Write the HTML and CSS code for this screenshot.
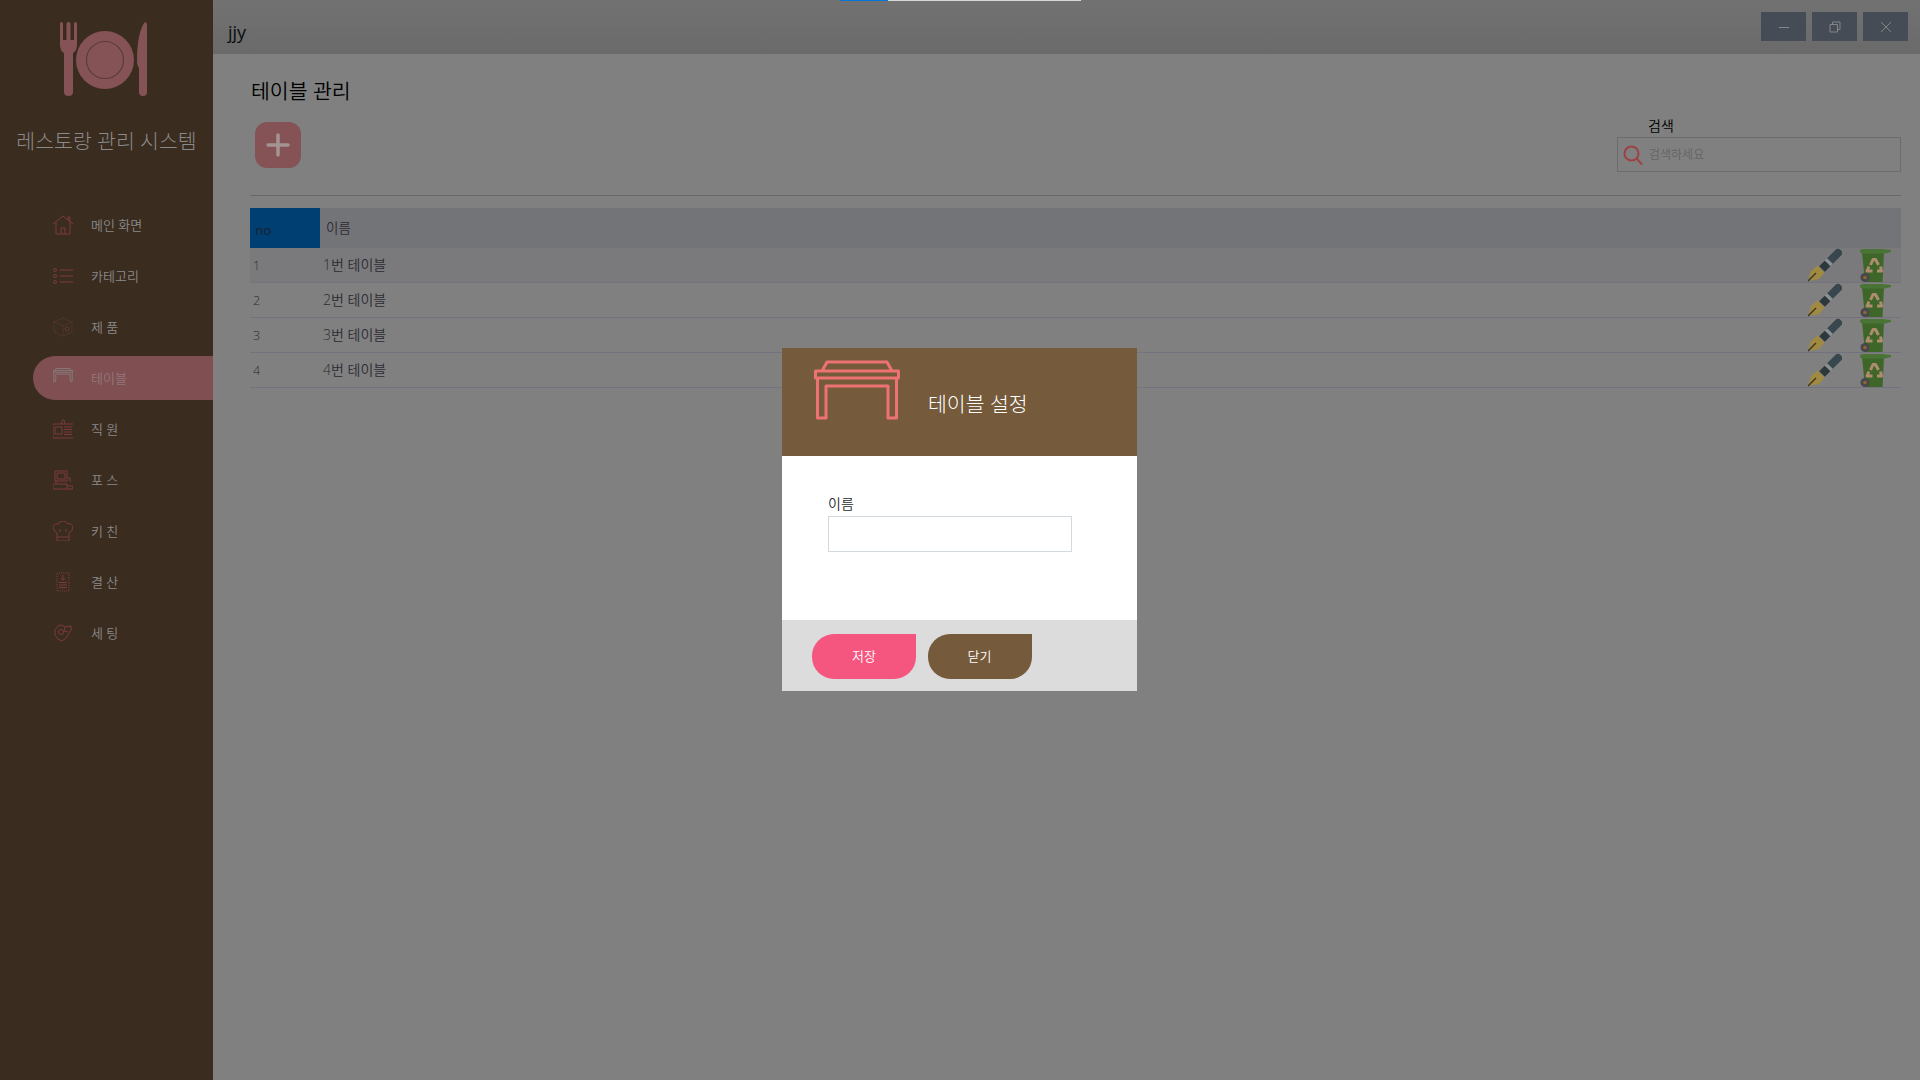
FILE: index.html
```html
<!DOCTYPE html>
<html lang="ko">
<head>
    <meta charset="UTF-8">
    <title>테이블 관리</title>
    <link rel="stylesheet" href="styles.css">
</head>
<body>
    <!-- shared icons -->
    <svg class="defs" width="0" height="0">
        <symbol id="ic-table" viewBox="0 0 86 60">
            <path d="M8 11 L13 2 H73 L78 11 M1.500 11 H84.500 V18 H1.500 Z M3.500 18 V58 H12 V26 H74 V58 H82.500 V18" fill="none" stroke="currentColor" stroke-width="3" stroke-linejoin="round"/>
        </symbol>
        <symbol id="ic-pen" viewBox="0 0 34 34">
            <path d="M22 13 L30 5" stroke="#37474d" stroke-width="8" stroke-linecap="round"/>
            <path d="M19.500 15.500 L22 13" stroke="#8c9092" stroke-width="8"/>
            <path d="M14 21 L19.500 15.500" stroke="#2c383c" stroke-width="8"/>
            <path d="M0 33 L3 23 L9.500 17.500 L16.500 24.500 L11 31 Z" fill="#a08a42"/>
            <path d="M0 33 L8 25" stroke="#3a3524" stroke-width="1.500"/>
        </symbol>
        <symbol id="ic-bin" viewBox="0 0 31 34">
            <path d="M2 4 H24 L22.500 34 H5 Z" fill="#3e6628"/>
            <path d="M0 3 Q0 1 3 1 H22 L31 2 V4 L25 5.500 H3 Q0 5.500 0 3 Z" fill="#4a7436"/>
            <path d="M10.500 17 L13 11.500 L15.500 11.500 L18.500 17 M20.500 18.500 L21.500 23 H17 M12.500 23 H7 L9 18.500" fill="none" stroke="#ae8c6e" stroke-width="3" stroke-linejoin="round"/>
            <circle cx="5" cy="29.500" r="4.500" fill="#4a4650"/>
            <circle cx="5" cy="29.500" r="1.800" fill="#8a6a2c"/>
        </symbol>
    </svg>

    <div class="strip"><span class="strip-on"></span><span class="strip-off"></span></div>

    <aside class="sidebar">
        <svg class="logo" viewBox="0 0 87 76" width="87" height="76">
            <path d="M0 4 Q0 2 1.500 2 Q3 2 3 4 V20 H6.500 V4 Q6.500 2 8.500 2 Q10.500 2 10.500 4 V20 H14 V4 Q14 2 15.500 2 Q17 2 17 4 V24 Q17 31 13 33 V72 Q13 76 8.500 76 Q4 76 4 72 V33 Q0 31 0 24 Z" fill="#855356"/>
            <circle cx="45" cy="40" r="29" fill="#855356"/>
            <circle cx="45" cy="40" r="18.500" fill="none" stroke="#5a3c38" stroke-width="1.200"/>
            <path d="M87 5 V72 Q87 76 83 76 Q79 76 79 72 V48 Q77 46 77 40 Q77 15 84 3 Q87 1 87 5 Z" fill="#855356"/>
        </svg>
        <h1 class="brand">레스토랑 관리 시스템</h1>
        <ul class="menu">
            <li class="menu-item">
                <svg class="menu-icon" viewBox="0 0 20 20"><path d="M0 9 L10 1 L20 9 M3 7 V19 H17 V7 M8 19 V13 H12 V19 M15 5 V2 H17 V7" /></svg>
                메인 화면
            </li>
            <li class="menu-item">
                <svg class="menu-icon" viewBox="0 0 20 20"><path d="M7 4 H20 M7 10 H20 M7 16 H20"/><circle cx="2" cy="4" r="1.500"/><circle cx="2" cy="10" r="1.500"/><circle cx="2" cy="16" r="1.500"/></svg>
                카테고리
            </li>
            <li class="menu-item">
                <svg class="menu-icon dim" viewBox="0 0 20 20"><path d="M10 1 L19 5 V15 L10 19 L1 15 V5 Z M1 5 L10 9 L19 5 M10 9 V19" stroke-dasharray="1.500 1"/><circle cx="14" cy="12" r="2"/></svg>
                제 품
            </li>
            <li class="menu-item is-active">
                <svg class="menu-icon table-icon" width="20" height="14"><use href="#ic-table"/></svg>
                테이블
            </li>
            <li class="menu-item">
                <svg class="menu-icon" viewBox="0 0 20 20"><path d="M0 5 H20 M0 5 V19 H20 M11 8 H19 M11 10.500 H19 M11 13 H19 M11 15.500 H19 M2 8 H9 V15 H2 Z M8 5 L9.500 1 H11 L12 5"/></svg>
                직 원
            </li>
            <li class="menu-item">
                <svg class="menu-icon" viewBox="0 0 20 20"><path d="M2 1 H14 V11 H2 Z M4 3 H12 V9 H4 Z M0 14 H14 V19 H0 Z M3 11 V14 M15 8 L17 8 V12 M14 16 H20 V19 H14"/></svg>
                포 스
            </li>
            <li class="menu-item">
                <svg class="menu-icon" viewBox="0 0 20 20"><path d="M4 12 Q0 10 0 6 Q1 2 5 3 Q7 0 10 0 Q13 0 15 3 Q19 2 20 6 Q20 10 16 12 V20 H4 Z M4 16 H16 M7 8 V11 M13 8 V11"/></svg>
                키 친
            </li>
            <li class="menu-item">
                <svg class="menu-icon" viewBox="0 0 20 20"><path d="M4 1 H16 V19 H4 Z" stroke-dasharray="1 1"/><path d="M10 3 V8 M8 6.500 L10 8 L12 6.500 M6 10.500 H14 M6 13 H14 M6 15.500 H14"/></svg>
                결 산
            </li>
            <li class="menu-item">
                <svg class="menu-icon" viewBox="0 0 20 20"><path d="M2 7 L5 3 L9 2 L12 4 L18 3 L18 7 L13 15 L9 18 L5 16 L2 12 Z M12 4 L11 8 L15 9"/><circle cx="8" cy="9" r="2.500"/></svg>
                세 팅
            </li>
        </ul>
    </aside>

    <div class="main">
        <header class="topbar">
            <span class="topbar-name">jjy</span>
            <div class="win-buttons">
                <button class="win-btn"><svg viewBox="0 0 12 12" width="12" height="12"><path d="M1 6.500 H11"/></svg></button>
                <button class="win-btn"><svg viewBox="0 0 12 12" width="12" height="12"><path d="M1 3.500 H8.500 V11 H1 Z M3.500 3.500 V1 H11 V8.500 H8.500"/></svg></button>
                <button class="win-btn"><svg viewBox="0 0 12 12" width="12" height="12"><path d="M1 1 L11 11 M11 1 L1 11"/></svg></button>
            </div>
        </header>

        <section class="content">
            <h2 class="page-title">테이블 관리</h2>
            <div class="toolbar">
                <button class="add-button"><svg viewBox="0 0 24 24" width="24" height="24"><path d="M12 2 V22 M2 12 H22"/></svg></button>
                <div class="search">
                    <label class="search-label">검색</label>
                    <div class="search-box">
                        <svg class="search-icon" viewBox="0 0 20 20" width="20" height="20"><circle cx="8.500" cy="8.500" r="7"/><path d="M13.500 13.500 L19 19.500"/></svg>
                        <span class="search-hint">검색하세요</span>
                    </div>
                </div>
            </div>
            <hr class="divider">
            <table class="list">
                <thead>
                    <tr><th class="col-no">no</th><th>이름</th><th></th></tr>
                </thead>
                <tbody>
                    <tr class="is-hover">
                        <td class="cell-no">1</td><td>1번 테이블</td>
                        <td class="actions"><svg class="pen"><use href="#ic-pen"/></svg><svg class="bin"><use href="#ic-bin"/></svg></td>
                    </tr>
                    <tr>
                        <td class="cell-no">2</td><td>2번 테이블</td>
                        <td class="actions"><svg class="pen"><use href="#ic-pen"/></svg><svg class="bin"><use href="#ic-bin"/></svg></td>
                    </tr>
                    <tr>
                        <td class="cell-no">3</td><td>3번 테이블</td>
                        <td class="actions"><svg class="pen"><use href="#ic-pen"/></svg><svg class="bin"><use href="#ic-bin"/></svg></td>
                    </tr>
                    <tr>
                        <td class="cell-no">4</td><td>4번 테이블</td>
                        <td class="actions"><svg class="pen"><use href="#ic-pen"/></svg><svg class="bin"><use href="#ic-bin"/></svg></td>
                    </tr>
                </tbody>
            </table>
        </section>
    </div>

    <div class="modal">
        <div class="modal-head">
            <svg class="modal-icon" width="86" height="60"><use href="#ic-table"/></svg>
            <h3 class="modal-title">테이블 설정</h3>
        </div>
        <div class="modal-body">
            <label class="field-label">이름</label>
            <input class="field-input" type="text">
        </div>
        <div class="modal-foot">
            <button class="btn btn-save">저장</button>
            <button class="btn btn-close">닫기</button>
        </div>
    </div>
</body>
</html>
```

FILE: styles.css
```css
* {
    box-sizing: border-box;
}
body {
    margin: 0;
    height: 100vh;
    display: flex;
    overflow: hidden;
    background: #808080;
    font-family: "Open Sans", "Noto Sans CJK KR", sans-serif;
    font-weight: 350;
    color: #2c2b33;
}
.defs {
    position: absolute;
}
.strip {
    position: absolute;
    top: 0;
    left: 840px;
    display: flex;
    height: 1px;
}
.strip-on {
    width: 48px;
    background: #0275d8;
}
.strip-off {
    width: 193px;
    background: #d8d8d8;
}

/* sidebar */
.sidebar {
    width: 213px;
    flex-shrink: 0;
    background: #3a2c1f;
    padding-top: 20px;
}
.logo {
    display: block;
    margin-left: 60px;
}
.brand {
    margin: 31px 0 0;
    height: 28px;
    line-height: 28px;
    font-size: 20.500px;
    font-weight: 300;
    color: #8a8a8a;
    text-align: center;
    white-space: nowrap;
}
.menu {
    list-style: none;
    margin: 48px 0 0;
    padding: 0;
    display: flex;
    flex-direction: column;
    gap: 7px;
}
.menu-item {
    height: 44px;
    margin-left: 33px;
    padding: 0 0 2px 20px;
    display: flex;
    align-items: center;
    gap: 18px;
    font-size: 13px;
    color: #8a8a8a;
    border-radius: 22px 0 0 22px;
}
.menu-icon {
    width: 20px;
    height: 20px;
    margin-top: 2px;
    fill: none;
    stroke: #7c3a3a;
    stroke-width: 1;
    flex-shrink: 0;
}
.menu-icon.dim {
    stroke: #5f3630;
}
.is-active {
    background: #7f4f52;
    color: #93777b;
}
.table-icon {
    height: 14px;
    margin-top: -4px;
    color: #8a8a8a;
    stroke: none;
}

/* top bar */
.main {
    flex: 1;
    display: flex;
    flex-direction: column;
}
.topbar {
    height: 54px;
    padding: 12px 12px 0 15px;
    display: flex;
    justify-content: space-between;
    background: linear-gradient(to bottom, #727272, #6a6a6a);
}
.topbar-name {
    margin-top: 8px;
    font-size: 18px;
    line-height: 24px;
    font-weight: 400;
    color: #0c0c0c;
}
.win-buttons {
    display: flex;
    gap: 6px;
}
.win-btn {
    width: 45px;
    height: 29px;
    padding: 0;
    border: 0;
    background: #454c55;
    display: flex;
    align-items: center;
    justify-content: center;
}
.win-btn svg {
    fill: none;
    stroke: #858585;
    stroke-width: 1;
}

/* page content */
.content {
    padding: 23px 19px 0 37px;
}
.page-title {
    margin: 0 0 0 1px;
    height: 28px;
    line-height: 28px;
    font-size: 20.500px;
    font-weight: 350;
    color: #000;
}
.toolbar {
    margin-top: 12px;
    height: 55px;
    display: flex;
    justify-content: space-between;
}
.add-button {
    width: 46px;
    height: 46px;
    margin: 5px 0 0 5px;
    padding: 0;
    border: 0;
    border-radius: 12px;
    background: #855356;
    display: flex;
    align-items: center;
    justify-content: center;
}
.add-button svg {
    fill: none;
    stroke: #a39393;
    stroke-width: 3.500;
    stroke-linecap: round;
}
.search {
    width: 284px;
}
.search-label {
    display: block;
    height: 20px;
    padding-left: 31px;
    line-height: 18px;
    font-size: 14px;
    color: #000;
}
.search-box {
    height: 35px;
    padding-left: 5px;
    border: 1px solid #6c6c6c;
    display: flex;
    align-items: center;
    gap: 6px;
}
.search-icon {
    fill: none;
    stroke: #9c4246;
    stroke-width: 2;
}
.search-hint {
    margin-top: -2px;
    font-size: 12px;
    color: #646464;
}
.divider {
    margin: 23px 0 0;
    height: 1px;
    border: 0;
    background: #686868;
}
.list {
    margin-top: 12px;
    width: 100%;
    border-collapse: separate;
    border-spacing: 0;
    font-size: 14px;
}
.list th {
    height: 40px;
    padding: 0 6px 3px;
    background: #737478;
    font-weight: 350;
    font-size: 13.500px;
    text-align: left;
}
.list .col-no {
    width: 70px;
    background: #003f72;
    padding: 3px 0 0 5px;
    font-weight: 400;
    color: #17212b;
}
.list td {
    height: 35px;
    padding: 0 3px 2px;
    border-bottom: 1px solid #74727f;
}
.list .cell-no {
    font-size: 12.500px;
    padding-bottom: 0;
}
.list .is-hover {
    background: #7a7a7c;
}
.actions {
    width: 110px;
    text-align: right;
    font-size: 0;
}
.list .actions {
    padding: 0 10px 0 0;
}
.pen {
    width: 34px;
    height: 34px;
    margin-right: 18px;
}
.bin {
    width: 31px;
    height: 34px;
}

/* modal */
.modal {
    position: absolute;
    left: 782px;
    top: 348px;
    width: 355px;
    height: 343px;
    display: flex;
    flex-direction: column;
    background: #fff;
}
.modal-head {
    height: 108px;
    flex-shrink: 0;
    padding: 12px 0 0 32px;
    display: flex;
    gap: 28px;
    background: #755a3b;
    color: #ee7272;
}
.modal-title {
    margin: 30px 0 0;
    height: 28px;
    line-height: 28px;
    font-size: 20.500px;
    font-weight: 300;
    color: #fff;
}
.modal-body {
    flex: 1;
    padding: 38px 0 0 46px;
}
.field-label {
    display: block;
    height: 22px;
    line-height: 20px;
    font-size: 14px;
    color: #292b2c;
}
.field-input {
    display: block;
    width: 244px;
    height: 36px;
    border: 1px solid #d3dadf;
    background: #fff;
}
.modal-foot {
    height: 71px;
    flex-shrink: 0;
    padding: 14px 0 0 30px;
    display: flex;
    gap: 11.500px;
    background: #dcdcdc;
}
.btn {
    width: 104px;
    height: 45px;
    padding: 0 0 3px;
    border: 0;
    border-radius: 22px 0 22px 22px;
    font-family: inherit;
    font-weight: 350;
    font-size: 13px;
    color: #fff;
}
.btn-save {
    background: #f4567f;
}
.btn-close {
    background: #755a3b;
}
```
